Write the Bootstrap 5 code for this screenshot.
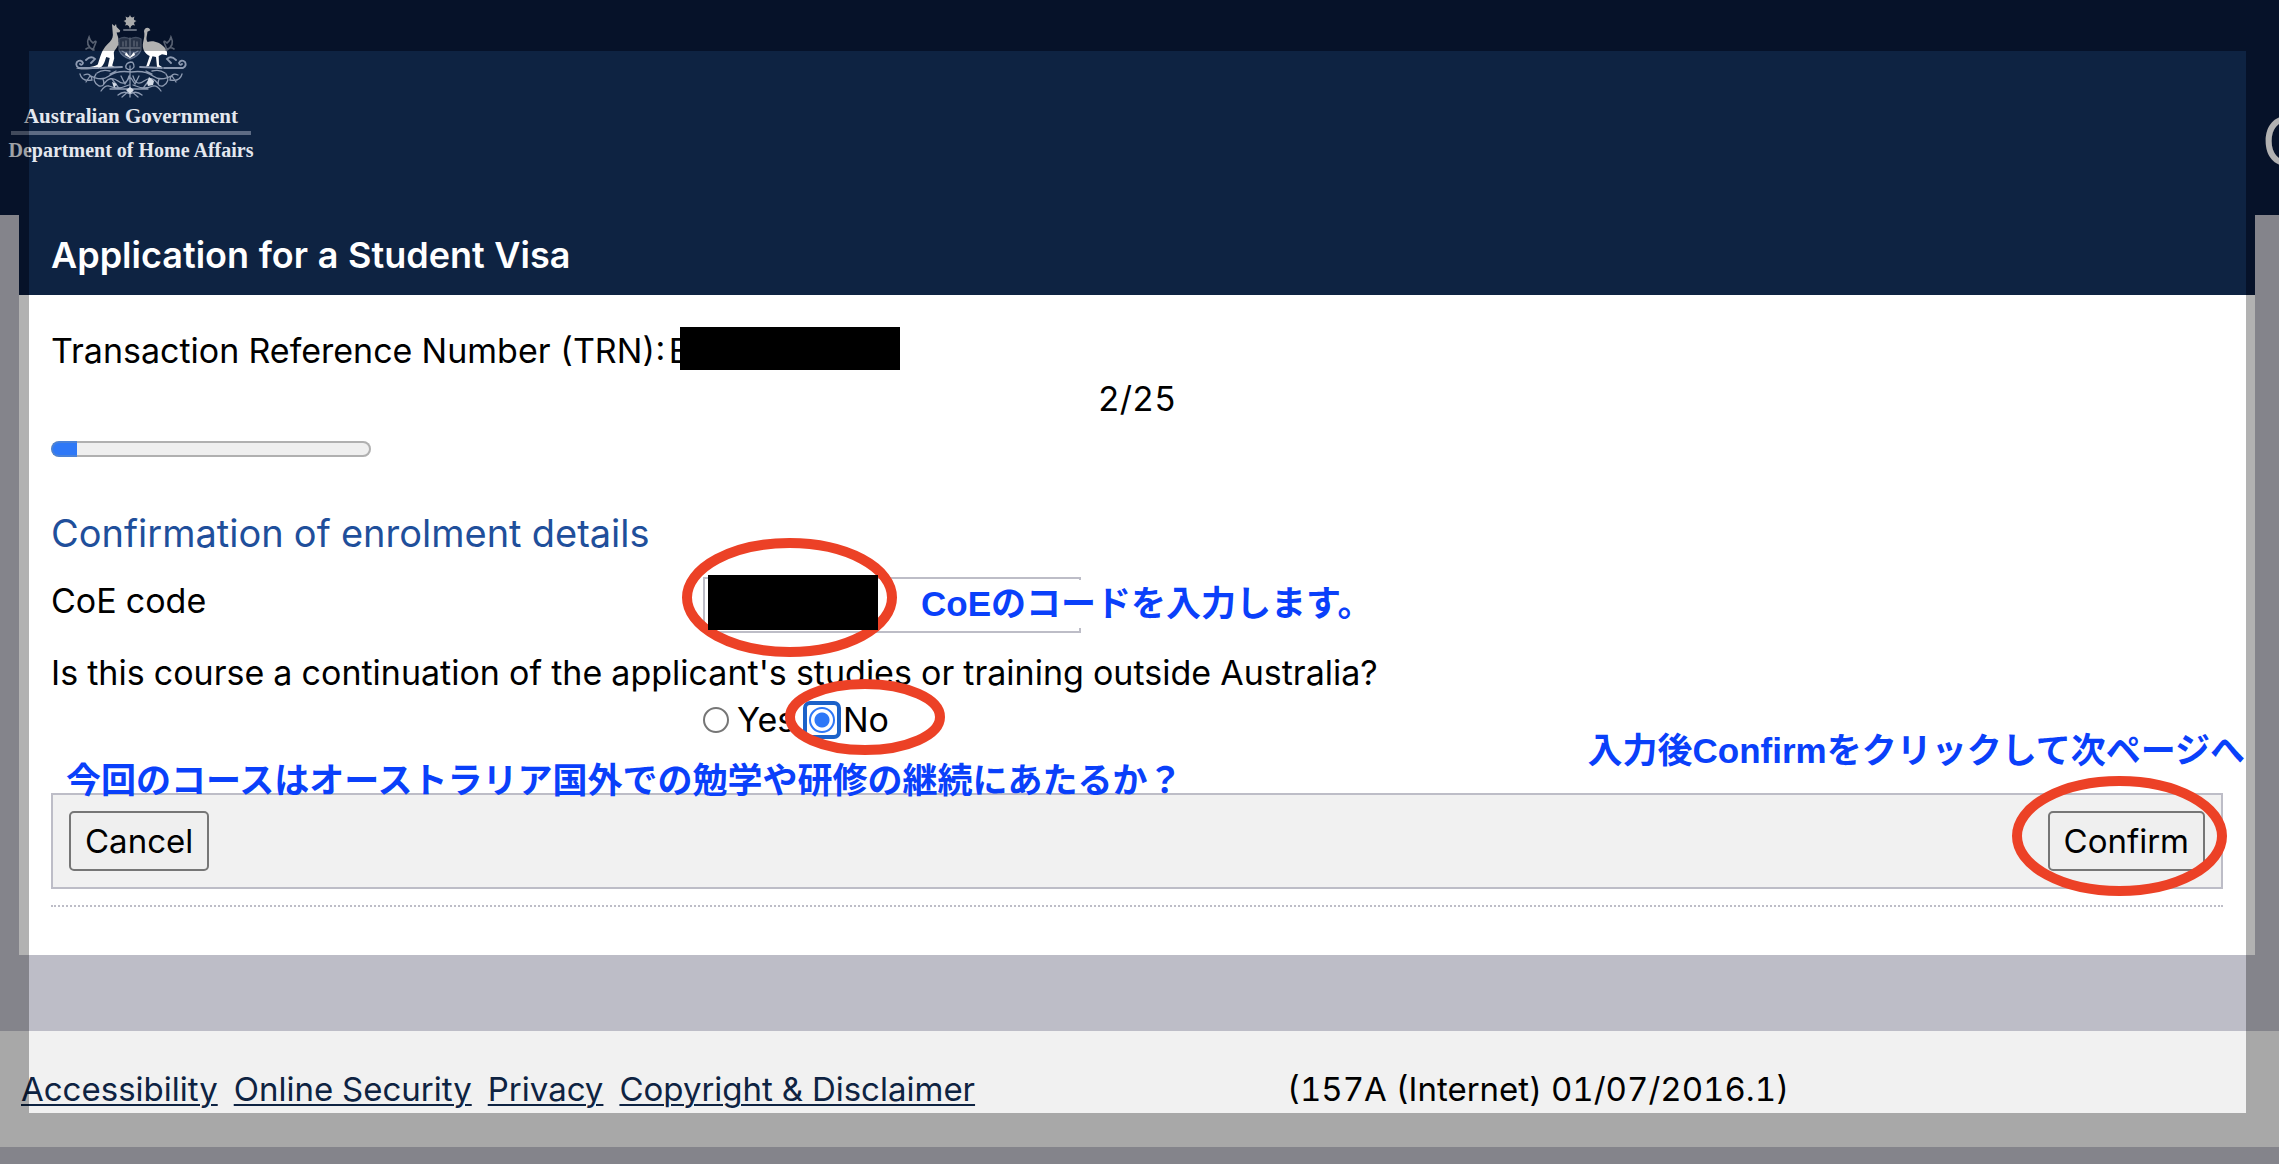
<!DOCTYPE html>
<html lang="en">
<head>
<meta charset="utf-8">
<meta name="viewport" content="width=device-width, initial-scale=1">
<title>Application for a Student Visa</title>
<link href="https://cdn.jsdelivr.net/npm/bootstrap@5.3.0/dist/css/bootstrap.min.css" rel="stylesheet">
<style>
  :root { --navy: #0e2342; --deep: #0a1b3b; --steel: #bdbdc7; --pale: #f1f1f1; --ring: #ec4126; --note: #0a40fa; }
  body { background: var(--steel); color: #000; font: 400 34px/40px Inter, "Noto Sans CJK JP", sans-serif; font-variant-numeric: tabular-nums; }
  .page-wrap { min-height: 100vh; overflow: hidden; }
  .spotlight { position: absolute; inset: 51px 33px 51px 29px; box-shadow: 0 0 0 200px rgba(0,0,0,.3); pointer-events: none; z-index: 1; }
  .site-top { height: 215px; background: linear-gradient(var(--navy), var(--navy)) no-repeat 29px 51px / calc(100% - 62px) 100% var(--deep); }
  .crest-link { width: 240px; margin: 14px 0 0 11px; color: #e4e8ef; text-decoration: none; text-align: center; font: 700 21px/24px "Liberation Serif", serif; white-space: nowrap; }
  .crest-link svg { display: block; width: 112px; height: 84px; margin: 0 auto 6px; }
  .crest-rule { height: 4px; margin: 3px 0; background: #5d6b84; }
  .crest-dept { font-size: 20px; display: flex; justify-content: center; }
  .site-name { color: #fff; font-size: 66px; line-height: 80px; margin: 101px -31px 0 0; }
  .sheet { margin: 0 24px 0 19px; background: #fff; }
  .sheet-title { background: linear-gradient(var(--navy), var(--navy)) no-repeat 10px 0 / calc(100% - 19px) 100% var(--deep); color: #fff; font-size: 36px; font-weight: 600; line-height: 80px; padding: 0 32px; margin: 0; }
  .sheet-body { padding: 36px 32px 48px; }
  .redact { background: #000; position: absolute; }
  .redact-trn { left: 629px; top: -4px; width: 220px; height: 43px; }
  .redact-coe { left: 5px; top: -2px; width: 170px; height: 55px; z-index: 2; }
  .step-bar { width: 320px; height: 16px; margin: 22px 0 52px; background: #efefef; box-shadow: inset 0 0 0 2px #b0b0b0; border-radius: 8px; }
  .step-bar .progress-bar { background: #2e78f7; border: 2px solid #4a82d8; border-right: 0; border-radius: 8px 0 0 8px; }
  .section-name { color: #1f4f9b; font-size: 38px; line-height: 48px; font-weight: 400; margin: 0 0 20px; }
  .label-col { flex: 0 0 652px; padding-top: 4px; }
  .code-field { width: 378px; height: 56px; border: 2px solid var(--steel); background: #fff; padding: 0 8px; display: block; }
  .choice-legend { float: none; font: inherit; margin: 0; padding: 4px 0 0; }
  .choice { appearance: none; width: 26px; height: 26px; margin: 0 8px 0 0; border: 2px solid #767676; border-radius: 50%; background: #fff; }
  .choice:checked { border-color: #2e78f7; background: radial-gradient(circle, #2e78f7 7px, #fff 8px); }
  .choice-box { width: 38px; height: 38px; border: 4px solid #1b62c9; border-radius: 7px; margin-right: 2px; }
  .choice-box .choice { flex: none; margin: 0; }
  .choice-row { margin: 7px 0 53px; height: 40px; }
  .yes-label { width: 66px; }
  .note { position: absolute; color: var(--note); font: 700 35px/48px "Liberation Sans", "Noto Sans CJK JP", sans-serif; white-space: nowrap; }
  .note-code { left: 218px; top: 3px; background: #fff; z-index: 1; }
  .note-course { left: 15px; bottom: -12px; z-index: 1; }
  .note-confirm { right: -22px; bottom: 18px; }
  .ring { position: absolute; overflow: visible; fill: none; stroke: var(--ring); stroke-width: 10; z-index: 1; }
  .ring-coe { left: -21px; top: -39px; }
  .ring-no { left: 82px; top: -21px; }
  .ring-confirm { right: -22px; top: -35px; }
  .action-bar { background: var(--pale); border: 2px solid var(--steel); padding: 16px; }
  .plain-btn { font: inherit; font-size: 33px; line-height: 39px; color: #000; background: #efefef; border: 2px solid #767676; border-radius: 5px; padding: 8px 14px; height: 60px; }
  .dots { border: 0; border-top: 2px dotted var(--steel); opacity: 1; margin: 16px 0 0; }
  .site-foot { margin-top: 76px; background: var(--pale); padding: 38px 21px; font-size: 33px; }
  .foot-links { flex: 0 0 1266px; gap: 16px; }
  .foot-links a { color: var(--navy); text-decoration: underline; text-decoration-thickness: 2px; text-underline-offset: 3px; }
</style>
</head>
<body>
<div class="page-wrap position-relative">
  <header class="site-top d-flex justify-content-between">
    <a class="crest-link" href="#">
      <svg viewBox="75 14 112 84" fill="none" stroke="#8d9ab1" stroke-width="1.3" stroke-linecap="round" aria-hidden="true">
        <path fill="#f4f5f7" stroke="none" d="M130 15l1.500 3 3-1.500-1 3.200 3 1.300-3 1.500 1.500 3-3.300-.8L130 29l-1.700-4.300-3.300.8 1.500-3-3-1.500 3-1.300-1-3.200 3 1.500z"/>
        <circle cx="130" cy="21.500" r="4.500" fill="#f4f5f7" stroke="none"/>
        <path d="M124 30h12" stroke-width="2"/>
        <path fill="#fff" stroke="none" d="M112 24l2.500 2 1.500-2 .6 3 3.600 3.500-.6 1.800-3 .2c.6 3 2.600 6 1.900 9l2.300 3.500-3 .5c-1 3-3.500 4.500-4 7l.4 6-2 7 2.500 1.500h-7l2-9-3.500-1c-1.500 5-3 10-7.500 11.500-7 1-15 1-23 .2 8-1 18-1.500 22-4.200 2.500-7 3.500-14 9.500-20 4-3.500 5.500-6 5.700-9.500z"/>
        <path fill="#fff" stroke="none" d="M144 31c1-4 5-4.200 6.400-.7l-3 1.500c-.2 4.500-2 7 .2 10.200 6-2 12.500 1 16 4.500 3 2.500 4 6 3.400 8.700l-5-1-3.300 1.700.3 9 3 2h-5l-1-10-3.500-.6-3.500 9.600-3 1 3.700-11c-5-2.500-8-7-6.500-14 1-4 1.700-7 .8-10.900z"/>
        <path d="M119 39q5-3 11 0 6-3 11 0v11q-3 7-11 9-8-2-11-9z" fill="#3a4a66" stroke="#5f6f8b"/>
        <path d="M130 38v20M120 48h20M123 42v4M126 41v5M134 41v5M137 42v4M122 51l5 3M138 51l-5 3" stroke="#8491a8"/>
        <path fill="#fff" stroke="none" d="M126 52l4 5 4-5 1 3-5 3-5-3z"/>
        <path d="M93 50q-8-5-4-13 1 4 4 6 3-3 3-1-2 5-3 8M86 49q4-3 8 1M167 50q8-5 4-13-1 4-4 6-3-3-3-1 2 5 3 8M174 49q-4-3-8 1" stroke="#7e8ba3" stroke-width="1.600"/>
        <path d="M98 68H79q-4-2-2-6 4-3 6 1-1 3-3 1M164 68h19q4-2 2-6-4-3-6 1 1 3 3 1M86 60q5-5 9-1l-4 4M176 60q-5-5-9-1l4 4M100 68l22-1M162 68l-22-1" stroke-width="1.800"/>
        <path d="M131 62q-6 1-5 6 5 4 8-1 0-5-3-5M131 72q-14-2-22 4t-20-1M131 72q14-2 22 4t20-1M130 66v31M80 74q2 8 12 6-1-8-8-5M182 74q-2 8-12 6 1-8 8-5M96 74q-5 7 3 12 7 1 4-7M166 74q5 7-3 12-7 1-4-7M104 84q6-9 14-3t11-5M158 84q-6-9-14-3t-11-5M101 91q4-6 8-5 9 4 20-1M161 91q-4-6-8-5-9 4-20-1M110 89h38M112 79l6 8M150 79l-6 8M116 71l-6 3M146 71l6 3M118 95q6-5 12-1 6-4 12 1M122 97l8-7 8 7M86 82l4-6M176 82l-4-6M110 71q-8-2-13 2M152 71q8-2 13 2M121 76l4 8 4-6M139 76l-4 8-4-6"/>
        <path fill="#d3dae5" stroke="none" d="M147 83l2-6 5 4-1 4-5 1zM112 82l5 2-3 4zM126 90l4-3 4 3-4 4z"/>
      </svg>
      <div>Australian Government</div>
      <div class="crest-rule"></div>
      <div class="crest-dept">Department of Home Affairs</div>
    </a>
    <div class="site-name" aria-hidden="true">C</div>
  </header>

  <main class="sheet">
    <h1 class="sheet-title">Application for a Student Visa</h1>
    <form class="sheet-body">
      <div class="position-relative d-flex gap-1"><span>Transaction Reference Number (TRN):</span><span>E</span><span class="redact redact-trn"></span></div>
      <div class="text-center mt-2">2/25</div>
      <div class="step-bar progress" role="progressbar" aria-label="Application progress" aria-valuenow="2" aria-valuemin="0" aria-valuemax="25">
        <div class="progress-bar" style="width: 8%"></div>
      </div>

      <h2 class="section-name">Confirmation of enrolment details</h2>
      <div class="d-flex align-items-start">
        <label class="label-col" for="coe">CoE code</label>
        <div class="position-relative">
          <input class="code-field" id="coe" type="text">
          <svg class="ring ring-coe" width="215" height="119" aria-hidden="true"><ellipse cx="107.500" cy="59.500" rx="102.500" ry="54.500"/></svg>
          <span class="redact redact-coe"></span>
          <span class="note note-code" lang="ja">CoEのコードを入力します。</span>
        </div>
      </div>

      <fieldset class="mt-3">
        <legend class="choice-legend">Is this course a continuation of the applicant's studies or training outside Australia?</legend>
        <div class="choice-row d-flex">
          <div class="label-col p-0"></div>
          <div class="position-relative d-flex align-items-center">
            <input class="choice" type="radio" name="continuation" id="cont-yes"><label class="yes-label" for="cont-yes">Yes</label>
            <span class="choice-box d-flex align-items-center justify-content-center"><input class="choice" type="radio" name="continuation" id="cont-no" checked></span><label for="cont-no">No</label>
            <svg class="ring ring-no" width="160" height="76" aria-hidden="true"><ellipse cx="80" cy="38" rx="75" ry="33"/></svg>
          </div>
        </div>
      </fieldset>

      <div class="position-relative">
        <div class="position-absolute top-0 start-0 end-0">
          <span class="note note-course" lang="ja">今回のコースはオーストラリア国外での勉学や研修の継続にあたるか？</span>
          <span class="note note-confirm" lang="ja">入力後Confirmをクリックして次ページへ</span>
        </div>
        <div class="action-bar d-flex justify-content-between">
          <button class="plain-btn" type="button">Cancel</button>
          <div class="position-relative">
            <button class="plain-btn" type="submit">Confirm</button>
            <svg class="ring ring-confirm" width="215" height="120" aria-hidden="true"><ellipse cx="107.500" cy="60" rx="102.500" ry="55"/></svg>
          </div>
        </div>
      </div>
      <hr class="dots">
    </form>
  </main>

  <footer class="site-foot d-flex">
    <nav class="foot-links d-flex" aria-label="Footer">
      <a href="#">Accessibility</a><a href="#">Online Security</a><a href="#">Privacy</a><a href="#">Copyright &amp; Disclaimer</a>
    </nav>
    <div>(157A (Internet) 01/07/2016.1)</div>
  </footer>
  <div class="spotlight"></div>
</div>
<script src="https://cdn.jsdelivr.net/npm/bootstrap@5.3.0/dist/js/bootstrap.bundle.min.js"></script>
</body>
</html>
